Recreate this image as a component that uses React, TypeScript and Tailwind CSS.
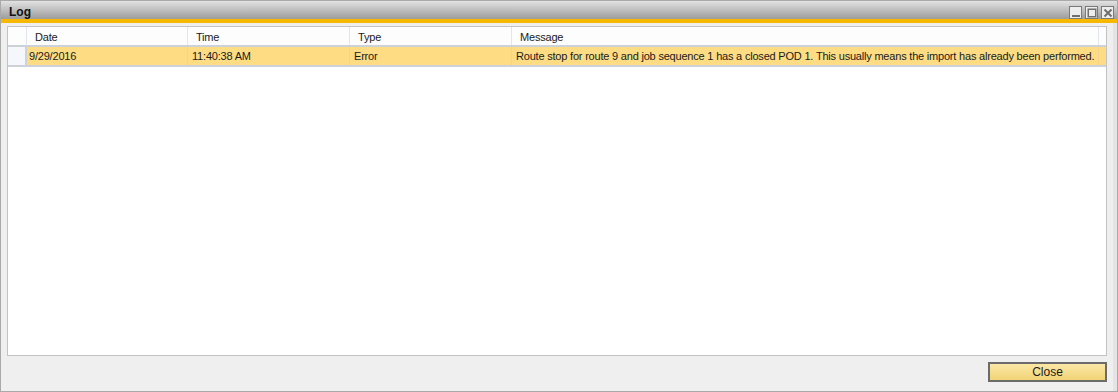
import React from 'react';

const font = { fontFamily: '"Liberation Sans", Arial, sans-serif' };

const columns = [
  { key: 'date', label: 'Date', width: 'w-[161px]' },
  { key: 'time', label: 'Time', width: 'w-[162px]' },
  { key: 'type', label: 'Type', width: 'w-[162px]' },
  { key: 'message', label: 'Message', width: 'w-[587px]' },
];

const rows = [
  {
    date: '9/29/2016',
    time: '11:40:38 AM',
    type: 'Error',
    message:
      'Route stop for route 9 and job sequence 1 has a closed POD 1. This usually means the import has already been performed.',
  },
];

const TitleButton: React.FC<{ kind: 'min' | 'max' | 'close' }> = ({ kind }) => (
  <div className="w-[13px] h-[13px] border-[1.5px] border-[#7a7a7a] bg-[#ededed] flex items-center justify-center">
    <svg width="10" height="10" viewBox="0 0 10 10">
      {kind === 'min' && <rect x="1" y="7" width="8" height="2" fill="#6e6e6e" />}
      {kind === 'max' && <rect x="1.25" y="1.25" width="7.5" height="7.5" fill="none" stroke="#6e6e6e" strokeWidth="1.5" />}
      {kind === 'close' && (
        <path d="M1.5 1.5 L8.5 8.5 M8.5 1.5 L1.5 8.5" stroke="#6e6e6e" strokeWidth="2" />
      )}
    </svg>
  </div>
);

export default function App() {
  return (
    <div className="w-[1118px] h-[392px] bg-white" style={font}>
      <div className="w-full h-full border border-[#a9a9a9] flex flex-col bg-[#efefef]">
        {/* Title bar */}
        <div className="h-[18px] flex items-center justify-between pl-[8px] pr-[3px] bg-gradient-to-b from-[#e2e2e2] to-[#9c9c9c]">
          <span className="text-[12px] font-bold text-[#111] leading-none pt-[3px]">Log</span>
          <div className="flex items-center gap-[3px] pt-[5px]">
            <TitleButton kind="min" />
            <TitleButton kind="max" />
            <TitleButton kind="close" />
          </div>
        </div>
        <div className="h-[4px] bg-[#f6b800]" />

        {/* Content */}
        <div className="flex-1 flex flex-col px-[6px] pt-[3px] pb-[9px] border-r-[4px] border-r-[#e4e4e4]">
          <div className="flex-1 bg-white border border-[#c3c3c3] flex flex-col text-[11px] text-[#1b1b1b] tracking-[-0.2px]">
            {/* Header */}
            <div className="h-[20px] flex border-b-2 border-[#cdd1d8] bg-[#fdfdfd]">
              <div className="w-[19px] border-r border-[#e1e6ee]" />
              {columns.map((c) => (
                <div key={c.key} className={`${c.width} border-r border-[#e1e6ee] pl-[8px] flex items-center pt-[2px]`}>
                  {c.label}
                </div>
              ))}
              <div className="flex-1" />
            </div>
            {/* Rows */}
            {rows.map((r, i) => (
              <div key={i} className="h-[20px] flex border-b-2 border-[#cdd1d8] bg-[#fddc84]">
                <div className="w-[19px] bg-[#f5f7fc] border-r-2 border-[#cdd1d8]" />
                <div className={`${columns[0].width} pl-[2px] flex items-center border-r border-[#f0d490]`}>{r.date}</div>
                <div className={`${columns[1].width} pl-[4px] flex items-center border-r border-[#f0d490]`}>{r.time}</div>
                <div className={`${columns[2].width} pl-[4px] flex items-center border-r border-[#f0d490]`}>{r.type}</div>
                <div className={`${columns[3].width} pl-[4px] flex items-center border-r border-[#f0d490] whitespace-nowrap overflow-hidden`}>
                  {r.message}
                </div>
                <div className="flex-1" />
              </div>
            ))}
          </div>

          {/* Footer */}
          <div className="flex justify-end pt-[6px] pr-0">
            <button className="w-[119px] h-[20px] border-2 border-[#6b6b6b] bg-gradient-to-b from-[#fbe7a6] to-[#f1d475] text-[12px] text-[#1b1b1b] leading-none">
              Close
            </button>
          </div>
        </div>
      </div>
    </div>
  );
}
